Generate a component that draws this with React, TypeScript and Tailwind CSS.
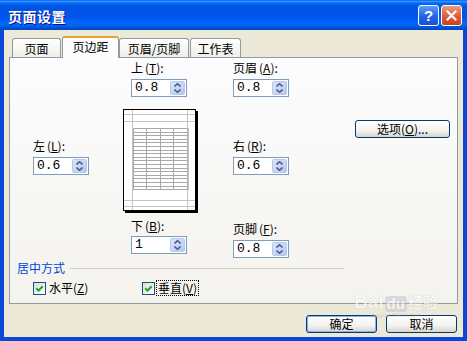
import React from "react";

function SpinArrows() {
  return (
    <div className="m-px flex w-[15px] flex-col items-center justify-center gap-[2px] rounded-[2px] border border-[#b7c6ee] bg-[linear-gradient(135deg,#dbe5fd,#b5c7f5)]">
      <svg width="7" height="4" viewBox="0 0 7 4" className="block">
        <polyline points="0.5,3.5 3.5,0.7 6.5,3.5" fill="none" stroke="#4d6185" strokeWidth="1.6" />
      </svg>
      <svg width="7" height="4" viewBox="0 0 7 4" className="block">
        <polyline points="0.5,0.5 3.5,3.3 6.5,0.5" fill="none" stroke="#4d6185" strokeWidth="1.6" />
      </svg>
    </div>
  );
}

function Spinner({ value }: { value: string }) {
  return (
    <div className="flex h-[18px] w-[56px] border border-[#7f9db9] bg-white">
      <div className="flex-1 pl-[3px] font-['Liberation_Mono',monospace] text-[13px] leading-[16px] text-black">
        {value}
      </div>
      <SpinArrows />
    </div>
  );
}

function Label({ text, k }: { text: string; k: string }) {
  return (
    <div className="h-[14px] whitespace-nowrap text-[12px] leading-[14px]">
      {text}
      <span className="ml-[2px]">(</span>
      <span className="underline">{k}</span>
      <span>):</span>
    </div>
  );
}

function Preview() {
  const cols = [10, 23, 37, 50, 64];
  const rows = Array.from({ length: 18 }, (_, i) => 19 + Math.round(i * 3.6));
  return (
    <svg width="75" height="104" viewBox="0 0 75 104" className="block">
      <rect x="2" y="2" width="73" height="102" fill="#000" />
      <rect x="0.5" y="0.5" width="72" height="101" fill="#fff" stroke="#000" />
      <g stroke="#c4c4c4" strokeWidth="1">
        <line x1="9.5" y1="1" x2="9.5" y2="101" />
        <line x1="64.5" y1="1" x2="64.5" y2="101" />
        <line x1="1" y1="5.5" x2="72" y2="5.5" />
        <line x1="1" y1="12.5" x2="72" y2="12.5" />
        <line x1="1" y1="91.5" x2="72" y2="91.5" />
        <line x1="1" y1="97.5" x2="72" y2="97.5" />
      </g>
      <g stroke="#a8a8a8" strokeWidth="1">
        {rows.map((y) => (
          <line key={y} x1="10" y1={y + 0.5} x2="64" y2={y + 0.5} />
        ))}
        {cols.map((x) => (
          <line key={x} x1={x + 0.5} y1="19" x2={x + 0.5} y2="81" />
        ))}
      </g>
      <line x1="65" y1="19" x2="65" y2="81" stroke="#b0b0b0" strokeWidth="1.5" />
    </svg>
  );
}

function CheckBox() {
  return (
    <div className="flex h-[13px] w-[13px] items-center justify-center border border-[#1c5180] bg-[linear-gradient(135deg,#dcdcd7,#ffffff)]">
      <svg width="11" height="11" viewBox="0 0 11 11" className="block">
        <polyline points="2.3,5.3 4.5,7.6 8.7,3.2" fill="none" stroke="#21a121" strokeWidth="2" />
      </svg>
    </div>
  );
}

function XpButton({ children, def = false, w }: { children: React.ReactNode; def?: boolean; w: string }) {
  return (
    <div
      className={
        "flex h-[18px] items-center justify-center rounded-[3px] border border-[#003c74] bg-[linear-gradient(180deg,#ffffff_0%,#f3f2ee_60%,#d9d5c9_100%)] text-[12px] leading-[16px] " +
        w +
        (def ? " shadow-[inset_0_0_0_1px_#8fadf0]" : "")
      }
    >
      {children}
    </div>
  );
}

export default function App() {
  return (
    <div className="relative flex h-[341px] w-[467px] select-none flex-col bg-[#0b48d9] font-['Noto_Sans_CJK_SC',sans-serif] text-black">
      {/* title bar */}
      <div className="flex h-[30px] items-center pl-[8px] pr-[5px] bg-[linear-gradient(180deg,#0058ee_0%,#3593ff_4%,#288eff_6%,#127dff_8%,#036ffc_10%,#0262ee_14%,#0057e5_20%,#0054e3_24%,#0055eb_56%,#005bf5_66%,#026afe_76%,#0062ef_86%,#0052d6_92%,#0046c4_100%)]">
        <div className="flex-1 pt-[1px] text-[14px] font-bold leading-[16px] tracking-[0.5px] text-white [text-shadow:1px_1px_0_#0f1089]">
          页面设置
        </div>
        <div className="flex gap-[2px]">
          <div className="flex h-[21px] w-[21px] items-center justify-center rounded-[3px] border border-white bg-[linear-gradient(180deg,#5d9bfb,#2463e6_55%,#1b50d4)] font-['Liberation_Sans',sans-serif] text-[15px] font-bold leading-none text-white">
            ?
          </div>
          <div className="flex h-[21px] w-[21px] items-center justify-center rounded-[3px] border border-white bg-[linear-gradient(180deg,#ee9a7d,#dd5d38_55%,#c8421c)]">
            <svg width="11" height="11" viewBox="0 0 11 11" className="block">
              <path d="M1.5 1.5 L9.5 9.5 M9.5 1.5 L1.5 9.5" stroke="#fff" strokeWidth="2.2" strokeLinecap="square" />
            </svg>
          </div>
        </div>
      </div>

      {/* body */}
      <div className="relative mx-[4px] mb-[4px] flex flex-1 flex-col bg-[#ece9d8] pt-[6px]">
        {/* tabs */}
        <div className="relative z-10 flex h-[21px] items-end pl-[8px] text-[12px]">
          <div className="h-[19px] w-[49px] rounded-t-[3px] border border-b-0 border-[#919b9c] bg-[linear-gradient(180deg,#ffffff,#efeee8)] pt-[1px] text-center leading-[17px]">
            页面
          </div>
          <div className="-mb-px ml-[1px] h-[22px] w-[57px] rounded-t-[3px] border-x border-t-[2px] border-x-[#919b9c] border-t-[#e8a03a] bg-[#fcfcfe] text-center leading-[18px]">
            页边距
          </div>
          <div className="h-[19px] w-[70px] rounded-t-[3px] border border-b-0 border-[#919b9c] bg-[linear-gradient(180deg,#ffffff,#efeee8)] pt-[1px] text-center leading-[17px]">
            页眉/页脚
          </div>
          <div className="ml-[1px] h-[19px] w-[51px] rounded-t-[3px] border border-b-0 border-[#919b9c] bg-[linear-gradient(180deg,#ffffff,#efeee8)] pt-[1px] text-center leading-[17px]">
            工作表
          </div>
        </div>

        {/* panel */}
        <div className="ml-[5px] flex h-[247px] w-[449px] flex-col border border-[#919b9c] bg-[linear-gradient(180deg,#fcfcfe,#f4f3ee)]">
          <div className="flex items-start pl-[23px]">
            <div className="w-[90px] pt-[81px]">
              <Label text="左" k="L" />
              <div className="mt-[4px]">
                <Spinner value="0.6" />
              </div>
            </div>
            <div className="w-[110px] pt-[3px]">
              <div className="ml-[8px]">
                <Label text="上" k="T" />
                <div className="mt-[4px]">
                  <Spinner value="0.8" />
                </div>
              </div>
              <div className="mt-[12px]">
                <Preview />
              </div>
              <div className="ml-[8px] mt-[6px]">
                <Label text="下" k="B" />
                <div className="mt-[3px]">
                  <Spinner value="1" />
                </div>
              </div>
            </div>
            <div className="w-[122px] pt-[3px]">
              <Label text="页眉" k="A" />
              <div className="mt-[4px]">
                <Spinner value="0.8" />
              </div>
              <div className="mt-[42px]">
                <Label text="右" k="R" />
              </div>
              <div className="mt-[4px]">
                <Spinner value="0.6" />
              </div>
              <div className="mt-[47px]">
                <Label text="页脚" k="F" />
              </div>
              <div className="mt-[4px]">
                <Spinner value="0.8" />
              </div>
            </div>
            <div className="pt-[62px]">
              <XpButton w="w-[95px]">
                选项(<span className="underline">O</span>)...
              </XpButton>
            </div>
          </div>

          {/* group */}
          <div className="mt-[3px] flex w-[334px] items-center gap-[5px] pl-[7px]">
            <div className="text-[12px] leading-[14px] text-[#0046d5]">居中方式</div>
            <div className="h-px flex-1 bg-[#d0d0bf]" />
          </div>
          <div className="mt-[6px] flex h-[14px] items-center pl-[23px] text-[12px] leading-[14px]">
            <div className="flex w-[109px] items-center gap-[3px]">
              <CheckBox />
              <div>
                水平(<span className="underline">Z</span>)
              </div>
            </div>
            <div className="flex items-center gap-[1px]">
              <CheckBox />
              <div className="border border-dotted border-black px-[1px]">
                垂直(<span className="underline">V</span>)
              </div>
            </div>
          </div>
        </div>

        {/* buttons */}
        <div className="mt-[11px] flex justify-end gap-[9px] pr-[6px]">
          <XpButton w="w-[71px]" def>
            确定
          </XpButton>
          <XpButton w="w-[71px]">取消</XpButton>
        </div>

        {/* watermark overlay */}
        <div className="pointer-events-none absolute left-[350px] top-[262px] flex flex-col items-center opacity-60">
          <div className="flex items-end font-['Liberation_Sans',sans-serif] text-[19px] font-bold leading-[20px] text-white [text-shadow:0_0_1px_#9a9a9a]">
            <span>Bai</span>
            <span className="mx-[1px] rounded-[3px] bg-[#c9c9d6] px-[2px] text-[15px] leading-[16px] text-white">du</span>
            <span className="font-['Noto_Sans_CJK_SC',sans-serif] text-[15px]">经验</span>
          </div>
          <div className="font-['Liberation_Sans',sans-serif] text-[6px] leading-[7px] text-[#bbbbbb]">jingyan.baidu.com</div>
        </div>
      </div>
    </div>
  );
}
